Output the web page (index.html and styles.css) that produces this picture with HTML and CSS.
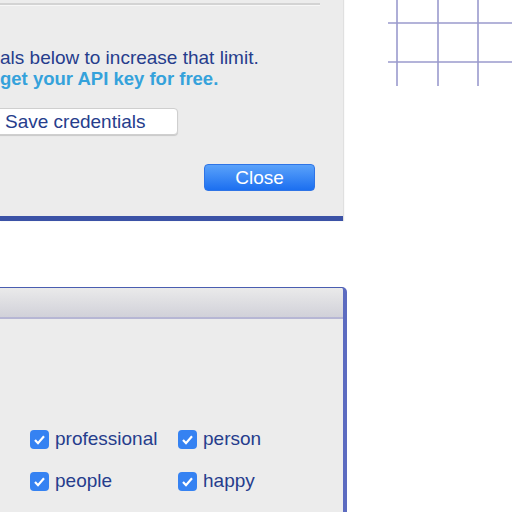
FILE: index.html
```html
<!DOCTYPE html>
<html lang="en">

<head>
  <meta charset="UTF-8">
  <meta name="viewport" content="width=device-width, initial-scale=1.0">
  <title>Credentials</title>
  <link rel="stylesheet" href="styles.css">
</head>

<body>
  <div class="top-row">
    <div class="dialog dialog-top">
      <div class="separator"></div>

      <p class="message">
        <span class="line">als below to increase that limit.</span>
        <a class="line link" href="#">get your API key for free.</a>
      </p>

      <button class="btn-save">Save credentials</button>

      <div class="actions">
        <button class="btn-close">Close</button>
      </div>
    </div>

    <div class="grid-art">
      <svg width="124" height="86" viewBox="0 0 124 86">
        <g stroke="#9a9acd" stroke-width="1.6">
          <line x1="9" y1="0" x2="9" y2="86" />
          <line x1="50" y1="0" x2="50" y2="86" />
          <line x1="90" y1="0" x2="90" y2="86" />
          <line x1="0" y1="23" x2="124" y2="23" />
          <line x1="0" y1="62" x2="124" y2="62" />
        </g>
      </svg>
    </div>
  </div>

  <div class="dialog dialog-bottom">
    <div class="titlebar"></div>
    <div class="dialog-body">
      <div class="tags">
        <label class="tag"><span class="check"></span>professional</label>
        <label class="tag"><span class="check"></span>person</label>
        <label class="tag"><span class="check"></span>people</label>
        <label class="tag"><span class="check"></span>happy</label>
      </div>
    </div>
  </div>
</body>

</html>
```

FILE: styles.css
```css
* {
  margin: 0;
  padding: 0;
  box-sizing: border-box;
}

body {
  font-family: "Liberation Sans", Arial, sans-serif;
  background: white;
  width: 512px;
  height: 512px;
  overflow: hidden;
  color: #263d8c;
}

.top-row {
  display: flex;
  align-items: flex-start;
  height: 287px;
}

.dialog {
  background: #ececec;
  width: 347px;
}

.dialog-top {
  height: 221px;
  width: 343px;
  border-bottom: 5px solid #3b52a6;
  box-shadow: 1px 0 1px rgba(0, 0, 0, 0.12);
  padding-top: 3px;
}

.separator {
  width: 320px;
  height: 3px;
  border-top: 2px solid #d3d3d3;
  border-bottom: 1px solid #f7f7f7;
}

.message {
  margin-top: 41px;
  font-size: 19px;
  line-height: 21px;
}

.line {
  display: block;
  white-space: nowrap;
}

.link {
  color: #35a2db;
  font-weight: bold;
  font-size: 18.5px;
  text-decoration: none;
}

.btn-save {
  display: block;
  margin-top: 19px;
  margin-left: -8px;
  width: 186px;
  height: 27px;
  padding-left: 12px;
  text-align: left;
  background: white;
  border: 1px solid #cfcfcf;
  border-radius: 4px;
  box-shadow: 0 1px 1px rgba(0, 0, 0, 0.15);
  font-family: inherit;
  font-size: 19px;
  color: #263d8c;
}

.actions {
  display: flex;
  justify-content: flex-end;
  padding-right: 28px;
  margin-top: 29px;
}

.btn-close {
  width: 111px;
  height: 27px;
  border: 1px solid #2e74e6;
  border-radius: 4px;
  background: linear-gradient(#5aa2fa, #1c6ff0);
  color: white;
  font-family: inherit;
  font-size: 19px;
}

.grid-art {
  margin-left: 45px;
  line-height: 0;
}

.dialog-bottom {
  height: 225px;
  border-top: 1px solid #4a5db0;
  border-right: 4px solid #5c6bc0;
  border-top-right-radius: 5px;
}

.titlebar {
  height: 31px;
  background: linear-gradient(#eaeaea, #d1d1d9);
  border-bottom: 2px solid #b6b6d4;
  border-top-right-radius: 4px;
}

.dialog-body {
  padding-top: 110px;
  padding-left: 30px;
}

.tags {
  display: grid;
  grid-template-columns: 148px auto;
  row-gap: 22px;
}

.tag {
  display: flex;
  align-items: center;
  gap: 6px;
  font-size: 19px;
  height: 20px;
}

.check {
  width: 19px;
  height: 19px;
  border-radius: 4px;
  background: #3582f2 url("data:image/svg+xml,%3Csvg xmlns='http://www.w3.org/2000/svg' width='19' height='19'%3E%3Cpath d='M5 10l3 3.2 6-7' fill='none' stroke='white' stroke-width='2.2'/%3E%3C/svg%3E") no-repeat center;
  flex-shrink: 0;
}
```
